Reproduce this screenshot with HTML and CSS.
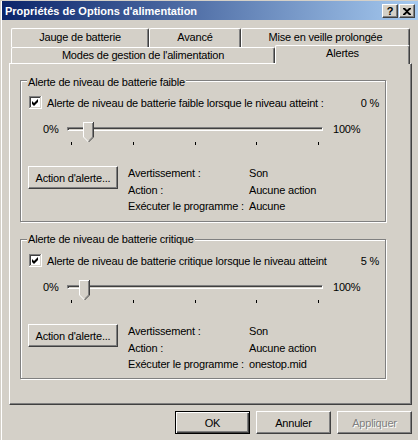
FILE: index.html
```html
<!DOCTYPE html>
<html lang="fr">
<head>
    <meta charset="UTF-8">
    <meta name="viewport" content="width=device-width, initial-scale=1.0">
    <title>Propriétés de Options d'alimentation</title>
    <link rel="stylesheet" href="styles.css">
</head>
<body>
    <div class="window">
        <div class="titlebar">
            <span class="title">Propriétés de Options d'alimentation</span>
            <div class="caption-buttons">
                <span class="cap-btn help">?</span>
                <span class="cap-btn close">
                    <svg width="8" height="7" viewBox="0 0 8 7">
                        <path d="M0 0h2l2 2 2-2h2v1L5 3.5 8 6v1H6L4 5 2 7H0V6l3-2.5L0 1z" fill="#000"/>
                    </svg>
                </span>
            </div>
        </div>

        <div class="dialog">
            <div class="tabs">
                <div class="tab-row back">
                    <div class="tab tab-jauge">Jauge de batterie</div>
                    <div class="tab tab-avance">Avancé</div>
                    <div class="tab tab-veille">Mise en veille prolongée</div>
                </div>
                <div class="tab-row front">
                    <div class="tab tab-modes">Modes de gestion de l'alimentation</div>
                    <div class="tab tab-alertes selected">Alertes</div>
                </div>
            </div>

            <div class="panel">
                <div class="group group-low">
                    <span class="legend">Alerte de niveau de batterie faible</span>
                    <div class="check-row">
                        <span class="checkbox">
                            <svg width="13" height="13" viewBox="0 0 13 13">
                                <path d="M0 0h12v1H1v11H0z" fill="#808080"/>
                                <path d="M12 0h1v13H0v-1h12z" fill="#fff"/>
                                <path d="M1 1h10v1H2v9H1z" fill="#404040"/>
                                <path d="M11 1h1v11H1v-1h10z" fill="#d4d0c8"/>
                                <rect x="2" y="2" width="9" height="9" fill="#fff"/>
                                <path d="M3 5l2 2 4-4v3l-4 4-2-2z" fill="#000"/>
                            </svg>
                        </span>
                        <span class="check-label">Alerte de niveau de batterie faible lorsque le niveau atteint :</span>
                        <span class="level">0 %</span>
                    </div>
                    <div class="slider-row">
                        <span class="slider-min">0%</span>
                        <div class="slider">
                            <svg class="thumb" style="left: 15px" width="11" height="20" viewBox="0 0 11 20">
                                <path d="M0 0h11v15l-5 5-6-5z" fill="#d4d0c8"/>
                                <path d="M0 0h10v1H1v14H0z" fill="#fff"/>
                                <path d="M0 15h1l5 5H5z" fill="#fff"/>
                                <path d="M10 0h1v15l-5 5H5l5-5z" fill="#404040"/>
                                <path d="M9 1h1v14l-4 4v-1l3-3z" fill="#808080"/>
                            </svg>
                        </div>
                        <span class="slider-max">100%</span>
                    </div>
                    <div class="ticks"><i></i><i></i><i></i><i></i><i></i></div>
                    <div class="action-row">
                        <button class="btn action-btn">Action d'alerte...</button>
                        <div class="info">
                            <span>Avertissement :</span><span>Son</span>
                            <span>Action :</span><span>Aucune action</span>
                            <span>Exécuter le programme :</span><span>Aucune</span>
                        </div>
                    </div>
                </div>

                <div class="group group-critical">
                    <span class="legend">Alerte de niveau de batterie critique</span>
                    <div class="check-row">
                        <span class="checkbox">
                            <svg width="13" height="13" viewBox="0 0 13 13">
                                <path d="M0 0h12v1H1v11H0z" fill="#808080"/>
                                <path d="M12 0h1v13H0v-1h12z" fill="#fff"/>
                                <path d="M1 1h10v1H2v9H1z" fill="#404040"/>
                                <path d="M11 1h1v11H1v-1h10z" fill="#d4d0c8"/>
                                <rect x="2" y="2" width="9" height="9" fill="#fff"/>
                                <path d="M3 5l2 2 4-4v3l-4 4-2-2z" fill="#000"/>
                            </svg>
                        </span>
                        <span class="check-label">Alerte de niveau de batterie critique lorsque le niveau atteint</span>
                        <span class="level">5 %</span>
                    </div>
                    <div class="slider-row">
                        <span class="slider-min">0%</span>
                        <div class="slider">
                            <svg class="thumb" style="left: 11px" width="11" height="20" viewBox="0 0 11 20">
                                <path d="M0 0h11v15l-5 5-6-5z" fill="#d4d0c8"/>
                                <path d="M0 0h10v1H1v14H0z" fill="#fff"/>
                                <path d="M0 15h1l5 5H5z" fill="#fff"/>
                                <path d="M10 0h1v15l-5 5H5l5-5z" fill="#404040"/>
                                <path d="M9 1h1v14l-4 4v-1l3-3z" fill="#808080"/>
                            </svg>
                        </div>
                        <span class="slider-max">100%</span>
                    </div>
                    <div class="ticks"><i></i><i></i><i></i><i></i><i></i></div>
                    <div class="action-row">
                        <button class="btn action-btn">Action d'alerte...</button>
                        <div class="info">
                            <span>Avertissement :</span><span>Son</span>
                            <span>Action :</span><span>Aucune action</span>
                            <span>Exécuter le programme :</span><span>onestop.mid</span>
                        </div>
                    </div>
                </div>
            </div>

            <div class="dialog-buttons">
                <button class="btn default">OK</button>
                <button class="btn">Annuler</button>
                <button class="btn disabled">Appliquer</button>
            </div>
        </div>
    </div>
</body>
</html>
```

FILE: styles.css
```css
* {
    margin: 0;
    padding: 0;
    box-sizing: border-box;
}

body {
    font-family: 'Liberation Sans', Arial, sans-serif;
    font-size: 11px;
    letter-spacing: -0.2px;
    color: #000;
    background: #d4d0c8;
}

.window {
    width: 418px;
    height: 440px;
    background: #d4d0c8;
    border-top: 1px solid #d4d0c8;
    border-left: 1px solid #d4d0c8;
    overflow: hidden;
}

.window > * {
    border-left: 1px solid #fff;
}

.titlebar {
    height: 19px;
    display: flex;
    align-items: center;
    justify-content: space-between;
    padding: 0 3px 0 3px;
    background: linear-gradient(90deg, #0a246a 0%, #a6caf0 100%);
    box-shadow: 0 -1px 0 #fff;
}

.title {
    color: #fff;
    font-weight: bold;
    font-size: 11px;
    letter-spacing: 0;
    line-height: 18px;
    white-space: nowrap;
}

.caption-buttons {
    display: flex;
    gap: 1px;
    margin-top: 1px;
}

.cap-btn {
    width: 16px;
    height: 14px;
    display: flex;
    align-items: center;
    justify-content: center;
    background: #d4d0c8;
    border-top: 1px solid #fff;
    border-left: 1px solid #fff;
    border-right: 1px solid #404040;
    border-bottom: 1px solid #404040;
    box-shadow: inset -1px -1px 0 #808080;
}

.cap-btn.help {
    font-weight: bold;
    font-size: 11px;
    line-height: 12px;
}

.dialog {
    padding: 8px 0 0 7px;
    height: 420px;
}

.tabs {
    width: 403px;
}

.tab-row {
    display: flex;
    padding-left: 2px;
    align-items: flex-start;
}

.tab-row.back {
    height: 19px;
}

.tab-row.front {
    height: 16px;
}

.tab {
    text-align: center;
    white-space: nowrap;
    background: #d4d0c8;
    border-top: 1px solid #fff;
    border-left: 1px solid #fff;
    border-right: 1px solid #404040;
    border-radius: 2px 2px 0 0;
    box-shadow: inset -1px 0 0 #808080;
}

.back .tab {
    height: 19px;
    line-height: 17px;
}

.front .tab {
    height: 16px;
    line-height: 15px;
}

.tab-jauge { width: 138px; }
.tab-avance { width: 92px; }
.tab-veille { width: 169px; }
.tab-modes { width: 264px; }

.front .tab.selected {
    width: 135px;
    height: 19px;
    margin-top: -2px;
    position: relative;
    z-index: 1;
}

.panel {
    width: 403px;
    height: 342px;
    padding: 16px 0 0 10px;
    border-top: 1px solid #fff;
    border-left: 1px solid #fff;
    border-right: 1px solid #404040;
    border-bottom: 1px solid #404040;
    box-shadow: inset -1px -1px 0 #808080;
}

.group {
    width: 366px;
    padding: 0 6px 0 8px;
    border: 1px solid #808080;
    box-shadow: inset 1px 1px 0 #fff, 1px 1px 0 #fff;
}

.group-low {
    height: 142px;
}

.group-critical {
    height: 140px;
    margin-top: 17px;
}

.legend {
    display: block;
    width: fit-content;
    line-height: 13px;
    margin: -7px 0 0 -2px;
    padding: 0 1px;
    background: #d4d0c8;
}

.group-low .legend {
    margin-top: -5px;
}

.check-row {
    display: flex;
    align-items: center;
    height: 13px;
    margin-top: 8px;
}

.group-low .check-row {
    margin-top: 7px;
}

.checkbox {
    width: 13px;
    height: 13px;
    display: block;
}

.checkbox svg {
    display: block;
}

.check-label {
    flex: 1;
    margin-left: 5px;
    white-space: nowrap;
}

.level {
    white-space: nowrap;
}

.slider-row {
    display: flex;
    align-items: center;
    height: 13px;
    margin-top: 13px;
}

.slider-min {
    width: 24px;
    margin-left: 14px;
}

.slider {
    position: relative;
    width: 256px;
    height: 4px;
    border-top: 1px solid #808080;
    border-left: 1px solid #808080;
    border-right: 1px solid #fff;
    border-bottom: 1px solid #fff;
    box-shadow: inset 1px 1px 0 #404040;
}

.thumb {
    position: absolute;
    top: -6px;
    display: block;
}

.slider-max {
    margin-left: 10px;
}

.ticks {
    display: flex;
    justify-content: space-between;
    width: 248px;
    height: 3px;
    margin: 7px 0 0 42px;
}

.ticks i {
    width: 1px;
    height: 3px;
    background: #000;
}

.action-row {
    display: flex;
    align-items: flex-start;
    margin-top: 21px;
}

.btn {
    font-family: inherit;
    font-size: 11px;
    letter-spacing: inherit;
    color: #000;
    background: #d4d0c8;
    height: 23px;
    border-top: 1px solid #fff;
    border-left: 1px solid #fff;
    border-right: 1px solid #404040;
    border-bottom: 1px solid #404040;
    box-shadow: inset -1px -1px 0 #808080;
    border-radius: 0;
}

.action-btn {
    width: 90px;
    margin-left: -1px;
}

.info {
    display: grid;
    grid-template-columns: 121px auto;
    line-height: 16.5px;
    margin: -1px 0 0 10px;
}

.dialog-buttons {
    display: flex;
    justify-content: flex-end;
    gap: 6px;
    width: 403px;
    margin-top: 6px;
}

.dialog-buttons .btn {
    width: 75px;
}

.btn.default {
    border: 1px solid #000;
    box-shadow: inset 1px 1px 0 #fff, inset -1px -1px 0 #404040, inset -2px -2px 0 #808080;
}

.btn.disabled {
    color: #808080;
    text-shadow: 1px 1px 0 #fff;
}
```
